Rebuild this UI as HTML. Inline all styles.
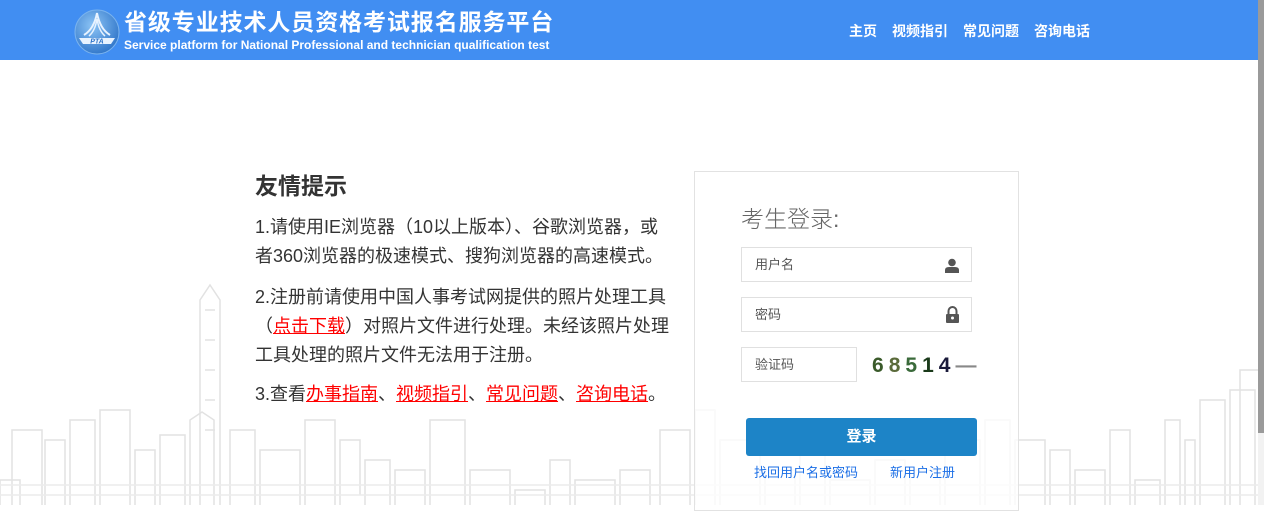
<!DOCTYPE html>
<html><head><meta charset="utf-8"><style>
*{margin:0;padding:0;box-sizing:border-box}
body{width:1264px;height:505px;overflow:hidden;background:#fff;font-family:"Liberation Sans","Noto Sans CJK SC",sans-serif;position:relative}
.hdr{position:absolute;left:0;top:0;width:1258px;height:60px;background:#418ef2}
.sb{position:absolute;left:1258px;top:0;width:6px;height:433px;background:#9a9a9a}
.sb2{position:absolute;left:1258px;top:433px;width:6px;height:72px;background:#f2f2f2}
.title{position:absolute;left:124px;top:3px;color:#fff;font-size:23px;font-weight:bold;letter-spacing:0.9px}
.sub{position:absolute;left:124px;top:38px;color:#fff;font-size:12px;font-weight:bold}
.nav{position:absolute;top:21px;color:#fff;font-size:14px;font-weight:bold}
.tip{position:absolute;left:255px;color:#333;font-size:18px;line-height:29px}
.tip a{color:#f00;text-decoration:underline}
.box{position:absolute;left:694px;top:171px;width:325px;height:340px;border:1px solid #e2e2e2;background:rgba(255,255,255,0.8)}
.inp{position:absolute;border:1px solid #e0e0e0;background:#fff;color:#555;font-size:13px;padding-left:13px;line-height:33px;height:35px}
</style></head><body>
<svg style="position:absolute;left:0;top:270px" width="1264" height="235" fill="none" stroke="#e2e2e2" stroke-width="1.5">
<g>
<path d="M0 235V210h20v25M12 235V160h30v75M45 235V170h20v65M70 235V150h25v85M100 235V140h30v95M135 235V180h20v55M160 235V165h25v70M190 235V150l12-8 12 8v85"/>
<path d="M200 235V30l10-15 10 15v205M205 40h10M205 70h10M205 100h10M205 130h10M205 160h10M230 235V160h25v75M260 235V180h40v55M305 235V150h30v85M340 235V170h20v55M365 235V190h25v45M395 235V200h30v35"/>
<path d="M430 235V150h35v85M470 235V200h40v35M515 235V220h30v15M550 235V190h20v45M575 235V210h40v25M620 235V200h30v35"/>
<path d="M660 235V160h30v75M695 235V140h20v95M720 235V170h40v65M765 235V200h30v35M800 235V180h25v55M830 235V210h40v35M875 235V190h30v45M910 235V200h30v35M945 235V170h35v65M985 235V150h25v85M1015 235V170h30v65"/>
<path d="M1050 235V180h20v55M1075 235V200h30v35M1110 235V160h20v75M1135 235V210h25v25M1165 235V150h15v85M1185 235V170h10v65M1200 235V130h25v105M1230 235V120h25v115M1240 235V100h20"/>
<path d="M0 215h1258M0 225h1258" stroke="#ececec"/>
</g></svg>
<div class="hdr"></div><div class="sb"></div><div class="sb2"></div>
<svg style="position:absolute;left:74px;top:9px" width="46" height="46" viewBox="0 0 46 46">
<defs><radialGradient id="g" cx="0.4" cy="0.35" r="0.7"><stop offset="0" stop-color="#8cc4f5"/><stop offset="1" stop-color="#2e74c8"/></radialGradient></defs>
<circle cx="23" cy="23" r="22" fill="url(#g)" stroke="#7ab3ee"/>
<path d="M10 26Q20 20 23 4Q26 20 36 26" fill="none" stroke="#e8f3ff" stroke-width="2"/>
<path d="M15 27Q21 22 23 10Q25 22 31 27" fill="none" stroke="#e8f3ff" stroke-width="1.5"/>
<path d="M5 29h36l-4 6H9z" fill="#e8f3ff"/>
<text x="23" y="34.5" font-size="7" font-weight="bold" font-style="italic" fill="#2e74c8" text-anchor="middle" font-family="Liberation Sans">PTA</text>
</svg>
<div class="title">省级专业技术人员资格考试报名服务平台</div>
<div class="sub">Service platform for National Professional and technician qualification test</div>
<div class="nav" style="left:849px">主页</div>
<div class="nav" style="left:892px">视频指引</div>
<div class="nav" style="left:963px">常见问题</div>
<div class="nav" style="left:1034px">咨询电话</div>

<div class="tip" style="top:171px;font-size:23px;font-weight:bold;line-height:30px">友情提示</div>
<div class="tip" style="top:213px">1.请使用IE浏览器（10以上版本）、谷歌浏览器，或<br>者360浏览器的极速模式、搜狗浏览器的高速模式。</div>
<div class="tip" style="top:283px">2.注册前请使用中国人事考试网提供的照片处理工具<br>（<a>点击下载</a>）对照片文件进行处理。未经该照片处理<br>工具处理的照片文件无法用于注册。</div>
<div class="tip" style="top:380px">3.查看<a>办事指南</a>、<a>视频指引</a>、<a>常见问题</a>、<a>咨询电话</a>。</div>

<div class="box"></div>
<div style="position:absolute;left:741px;top:200px;font-size:23px;color:#666;font-weight:300">考生登录:</div>
<div class="inp" style="left:741px;top:247px;width:231px">用户名
<svg style="position:absolute;right:11px;top:10px" width="16" height="15" viewBox="0 0 16 15"><circle cx="8" cy="4.5" r="3.8" fill="#555"/><path d="M1 15v-3q0-3 4-3h6q4 0 4 3v3z" fill="#555"/></svg></div>
<div class="inp" style="left:741px;top:297px;width:231px">密码
<svg style="position:absolute;right:11px;top:8px" width="15" height="17" viewBox="0 0 15 17"><path d="M3.5 8V5a4 4 0 0 1 8 0v3" fill="none" stroke="#555" stroke-width="2"/><rect x="1" y="8" width="13" height="9" rx="1" fill="#555"/><circle cx="7.5" cy="12" r="1.5" fill="#fff"/></svg></div>
<div class="inp" style="left:741px;top:347px;width:116px">验证码</div>
<div style="position:absolute;left:872px;top:354px;font-family:'Liberation Sans Narrow','Liberation Sans',sans-serif;font-weight:bold;font-size:21px;letter-spacing:5px"><span style="color:#3a5a2a">6</span><span style="color:#5a6a3a">8</span><span style="color:#3a6a3a">5</span><span style="color:#1a3a1a">1</span><span style="color:#1a1a3a">4</span><span style="color:#888;letter-spacing:0">—</span></div>
<div style="position:absolute;left:746px;top:418px;width:231px;height:38px;background:#1d84c7;border-radius:3px;color:#fff;font-size:15px;font-weight:bold;text-align:center;line-height:38px">登录</div>
<div style="position:absolute;left:754px;top:462px;font-size:13px;color:#1a6ee6">找回用户名或密码</div>
<div style="position:absolute;left:890px;top:462px;font-size:13px;color:#1a6ee6">新用户注册</div>
</body></html>
